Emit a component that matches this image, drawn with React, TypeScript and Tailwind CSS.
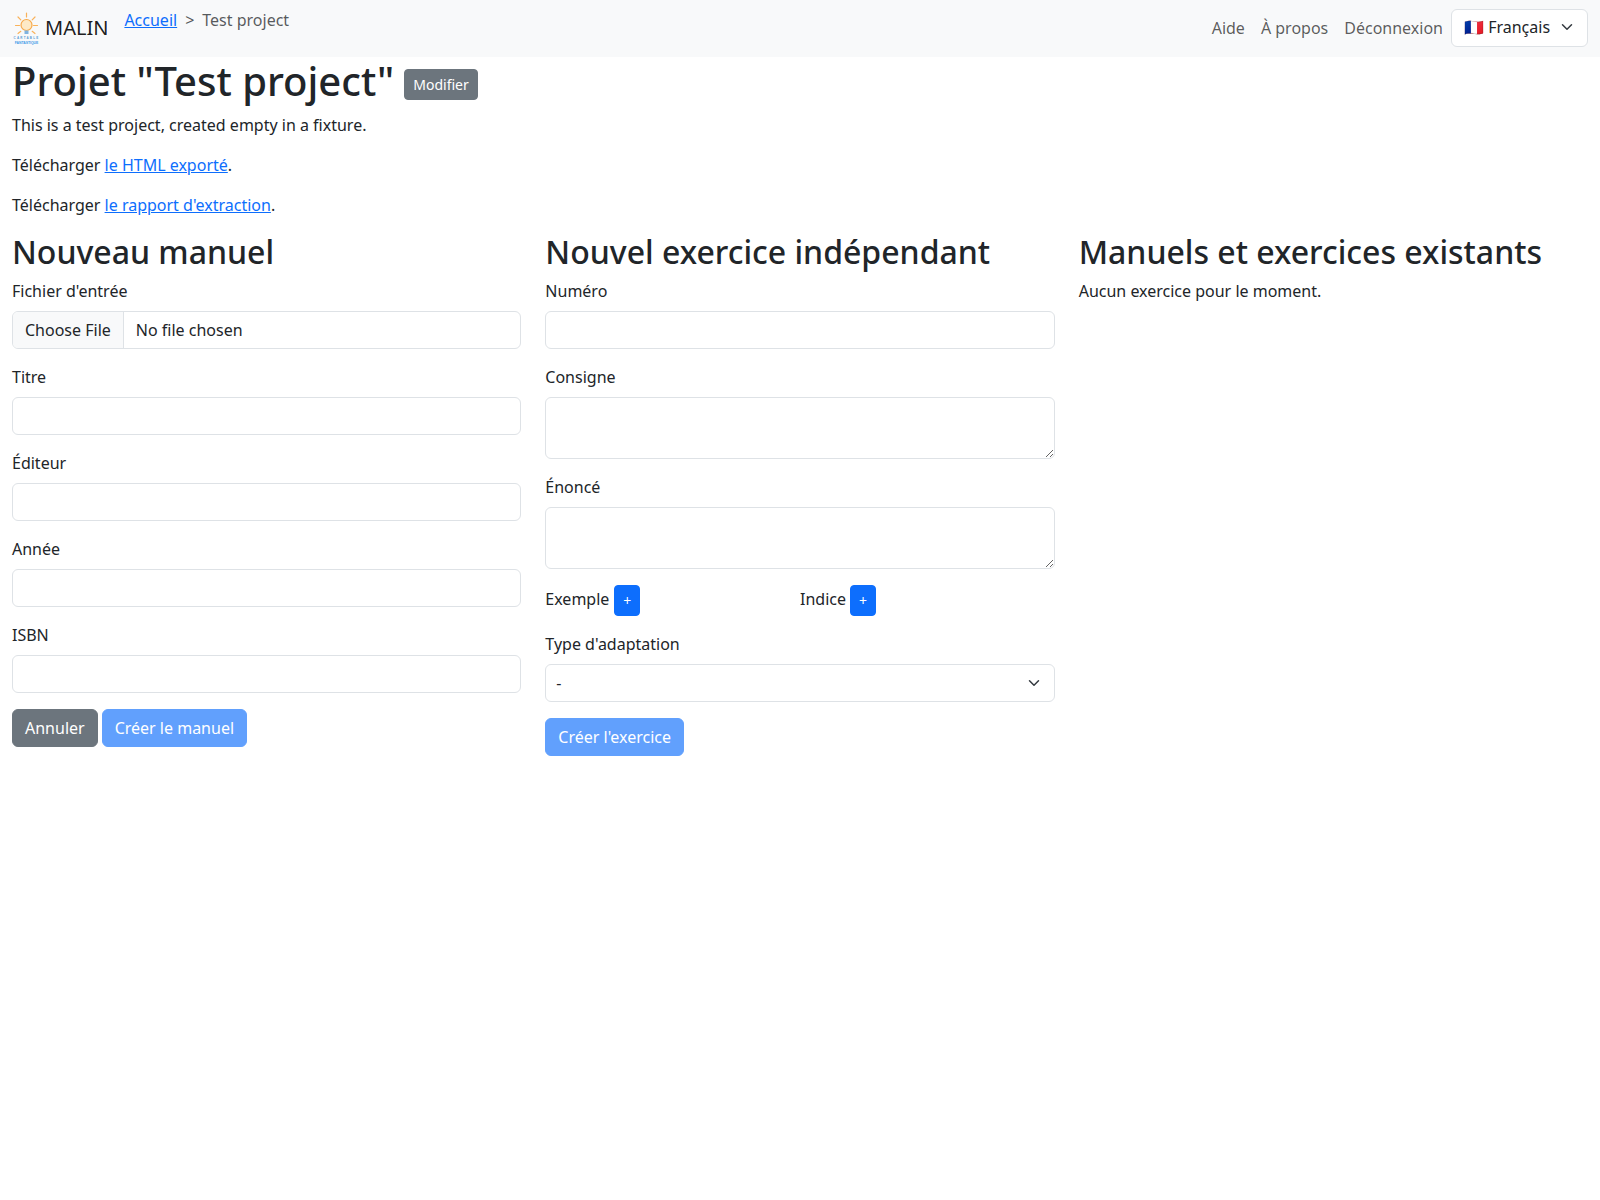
import React from "react";

const inputCls =
  "block w-full rounded-[6px] border border-[#dee2e6] bg-white px-3 py-1.5 text-base leading-6 text-[#212529]";

function Chevron({ className }: { className: string }) {
  return (
    <svg viewBox="0 0 16 16" className={className} fill="none" stroke="#343a40" strokeWidth={2} strokeLinecap="round" strokeLinejoin="round">
      <path d="m2 5 6 6 6-6" />
    </svg>
  );
}

function Logo() {
  return (
    <svg viewBox="0 0 30 34" className="h-[34px] w-[30px] shrink-0">
      <g stroke="#f9b25a" strokeWidth={1.2} strokeLinecap="round">
        <path d="M14.5 2v4M6 6l2.8 2.8M23 6l-2.8 2.8M3.5 14.5h4M21.5 14.5h4M6 22.5l2.8-2.2M23 22.5l-2.8-2.2" />
      </g>
      <circle cx="14.5" cy="14" r="5.5" fill="#fde9c6" stroke="#f7a94a" strokeWidth={1.2} />
      <path d="M12.5 19.5h4v3.5h-4z" fill="#7fb2e0" />
      <text x="14.5" y="28" textAnchor="middle" fontSize="3" fontWeight="700" fill="#5b9bd5" fontFamily="'Liberation Sans', sans-serif" letterSpacing="1.2">CARTABLE</text>
      <text x="14.5" y="32.5" textAnchor="middle" fontSize="3.4" fontWeight="700" fill="#3f9be8" fontFamily="'Liberation Sans', sans-serif">FANTASTIQUE</text>
    </svg>
  );
}

function Field({ label, children }: { label: string; children: React.ReactNode }) {
  return (
    <div className="mb-4">
      <label className="mb-2 block">{label}</label>
      {children}
    </div>
  );
}

function H2({ children }: { children: React.ReactNode }) {
  return <h2 className="mb-2 text-[32px] font-medium leading-[1.2]">{children}</h2>;
}

function DisabledButton({ children }: { children: React.ReactNode }) {
  return (
    <button disabled className="rounded-[6px] border border-[#0d6efd] bg-[#0d6efd] px-3 py-1.5 text-base leading-6 text-white opacity-65">
      {children}
    </button>
  );
}

function PlusButton() {
  return (
    <button className="rounded-[4px] border border-[#0d6efd] bg-[#0d6efd] px-2 py-1 text-sm leading-[21px] text-white">+</button>
  );
}

export default function App() {
  return (
    <div className="min-h-[1200px] bg-white text-base leading-6 text-[#212529] font-['Noto_Sans',sans-serif]">
      <nav className="flex h-[57px] items-start bg-[#f8f9fa] px-3 py-2">
        <a className="mr-4 flex h-10 items-center gap-[3px] text-xl text-black/90">
          <Logo />
          <span className="leading-[30px]">MALIN</span>
        </a>
        <ol className="flex">
          <li><a className="text-[#0d6efd] underline">Accueil</a></li>
          <li className="pl-2 text-[#212529]/75">
            <span className="pr-2 text-[#212529]/75">&gt;</span>Test project
          </li>
        </ol>
        <div className="ml-auto flex items-center">
          <a className="p-2 text-black/65">Aide</a>
          <a className="p-2 text-black/65">À propos</a>
          <a className="p-2 text-black/65">Déconnexion</a>
          <div className="flex h-[38px] w-[137px] items-center rounded-[6px] border border-[#dee2e6] bg-white pb-[2px] pl-3 pr-3">
            <span>🇫🇷 Français</span>
            <Chevron className="ml-auto h-3 w-4" />
          </div>
        </div>
      </nav>
      <main className="px-3">
        <h1 className="mb-2 flex items-center text-[40px] font-medium leading-[48px]">
          <span>Projet "Test project"</span>
          <button className="ml-[10px] mt-[6px] rounded-[4px] border border-[#6c757d] bg-[#6c757d] px-2 py-1 text-sm leading-[21px] font-normal text-white">Modifier</button>
        </h1>
        <p className="mb-4">This is a test project, created empty in a fixture.</p>
        <p className="mb-4">Télécharger <a className="text-[#0d6efd] underline">le HTML exporté</a>.</p>
        <p className="mb-4">Télécharger <a className="text-[#0d6efd] underline">le rapport d'extraction</a>.</p>
        <div className="grid grid-cols-3 gap-x-6">
          <section>
            <H2>Nouveau manuel</H2>
            <Field label="Fichier d'entrée">
              <div className="flex h-[38px] items-center overflow-hidden rounded-[6px] border border-[#dee2e6] bg-white">
                <span className="flex h-full items-center border-r border-[#dee2e6] bg-[#f8f9fa] px-3">Choose File</span>
                <span className="px-3">No file chosen</span>
              </div>
            </Field>
            <Field label="Titre"><input className={inputCls} /></Field>
            <Field label="Éditeur"><input className={inputCls} /></Field>
            <Field label="Année"><input className={inputCls} /></Field>
            <Field label="ISBN"><input className={inputCls} /></Field>
            <div className="flex gap-1">
              <button className="rounded-[6px] border border-[#6c757d] bg-[#6c757d] px-3 py-1.5 text-base leading-6 text-white">Annuler</button>
              <DisabledButton>Créer le manuel</DisabledButton>
            </div>
          </section>
          <section>
            <H2>Nouvel exercice indépendant</H2>
            <Field label="Numéro"><input className={inputCls} /></Field>
            <Field label="Consigne"><textarea rows={2} className={inputCls} /></Field>
            <Field label="Énoncé"><textarea rows={2} className={inputCls} /></Field>
            <div className="mb-4 grid grid-cols-2">
              <div className="flex items-start gap-[5px]">
                <span className="leading-[29px]">Exemple</span>
                <PlusButton />
              </div>
              <div className="flex items-start gap-1">
                <span className="leading-[29px]">Indice</span>
                <PlusButton />
              </div>
            </div>
            <Field label="Type d'adaptation">
              <div className="relative">
                <select className={inputCls + " appearance-none pl-[10px] pr-9"}>
                  <option>-</option>
                </select>
                <Chevron className="pointer-events-none absolute right-[13px] top-[13px] h-3 w-4" />
              </div>
            </Field>
            <DisabledButton>Créer l'exercice</DisabledButton>
          </section>
          <section>
            <H2>Manuels et exercices existants</H2>
            <p>Aucun exercice pour le moment.</p>
          </section>
        </div>
      </main>
    </div>
  );
}
